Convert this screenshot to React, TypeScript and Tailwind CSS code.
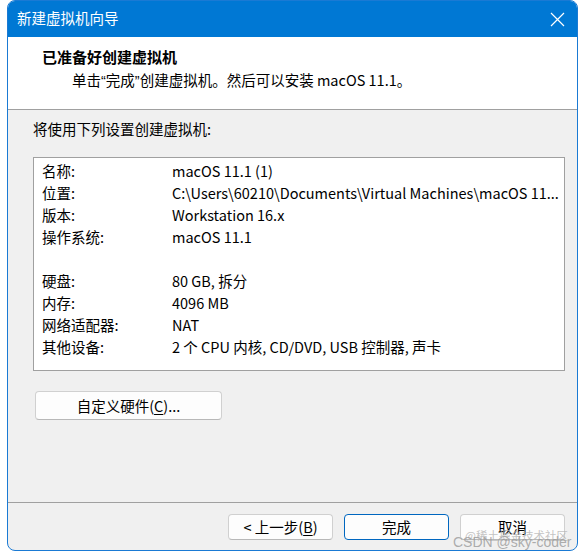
import React from "react";

const font = { fontFamily: '"Noto Sans CJK SC", "Noto Sans", sans-serif' };
const latin = { fontFamily: '"Liberation Sans", Arial, sans-serif' };

const rows: [string, string][] = [
  ["名称:", "macOS 11.1 (1)"],
  ["位置:", "C:\\Users\\60210\\Documents\\Virtual Machines\\macOS 11..."],
  ["版本:", "Workstation 16.x"],
  ["操作系统:", "macOS 11.1"],
  ["", ""],
  ["硬盘:", "80 GB, 拆分"],
  ["内存:", "4096 MB"],
  ["网络适配器:", "NAT"],
  ["其他设备:", "2 个 CPU 内核, CD/DVD, USB 控制器, 声卡"],
];

export default function App() {
  return (
    <div className="w-[586px] h-[559px] bg-white relative overflow-hidden" style={font}>
      <div className="ml-[7px] w-[571px] h-[551px] flex flex-col rounded-[8px] border border-[#1a7ad4] overflow-hidden bg-[#f0f0f0]">
        {/* title bar */}
        <div className="h-[37px] shrink-0 bg-[#0078d4] flex items-center pl-[10px] pr-[13px] justify-between -mx-px -mt-px">
          <span className="text-white text-[14.5px] leading-none">新建虚拟机向导</span>
          <svg width="15" height="15" viewBox="0 0 15 15" className="mt-[1px]">
            <path d="M1 1 L14 14 M14 1 L1 14" stroke="white" strokeWidth="1.2" fill="none" />
          </svg>
        </div>
        {/* header */}
        <div className="h-[73px] shrink-0 bg-white border-b border-[#a0a0a0] flex flex-col pl-[34px] pt-[10px]">
          <div className="text-[15px] font-bold text-black leading-[20px]">已准备好创建虚拟机</div>
          <div className="text-[14.5px] text-black leading-[20px] pl-[30px] mt-[3px]">
            单击<span style={latin}>“</span>完成<span style={latin}>”</span>创建虚拟机。然后可以安装 macOS 11.1。
          </div>
        </div>
        {/* body */}
        <div className="flex-1 flex flex-col pl-[25px] pr-[12px] pt-[9px]">
          <div className="text-[14.5px] text-black leading-[20px]">将使用下列设置创建虚拟机:</div>
          <div className="mt-[18px] h-[214px] bg-white border border-[#a0a0a0] pt-[2px] pl-[8px]">
            {rows.map(([k, v], i) => (
              <div key={i} className="flex h-[22px] items-center text-[14.5px] text-black">
                <span className="w-[130px] shrink-0">{k}</span>
                <span className="whitespace-nowrap">{v}</span>
              </div>
            ))}
          </div>
          <button className="mt-[20px] ml-[2px] w-[187px] h-[29px] bg-[#fdfdfd] border border-[#d0d0d0] border-b-[#b8b8b8] rounded-[4px] text-[14.5px] text-black flex items-center justify-center">
            自定义硬件(<span className="underline underline-offset-2">C</span>)...
          </button>
        </div>
        {/* footer */}
        <div className="h-[48px] shrink-0 border-t border-[#a0a0a0] flex items-start justify-end pr-[12px] pt-[11px] gap-[11px]">
          <button className="w-[105px] h-[26px] bg-[#fdfdfd] border border-[#d0d0d0] border-b-[#b8b8b8] rounded-[4px] text-[14.5px] text-black flex items-center justify-center">
            &lt; 上一步(<span className="underline underline-offset-2">B</span>)
          </button>
          <button className="w-[105px] h-[26px] bg-[#fdfdfd] border border-[#0067c0] rounded-[4px] text-[14.5px] text-black flex items-center justify-center">
            完成
          </button>
          <button className="w-[105px] h-[26px] bg-[#fdfdfd] border border-[#d0d0d0] border-b-[#b8b8b8] rounded-[4px] text-[14.5px] text-black flex items-center justify-center">
            取消
          </button>
        </div>
      </div>
      {/* watermark */}
      <div className="absolute left-[465px] top-[530px] text-[11.5px] leading-none text-[#b4b4b4]/80 whitespace-nowrap">@稀土掘金技术社区</div>
      <div className="absolute left-[453px] top-[535px] text-[14px] leading-none text-[#9a9a9a]/80 whitespace-nowrap" style={latin}>CSDN @sky-coder</div>
    </div>
  );
}
